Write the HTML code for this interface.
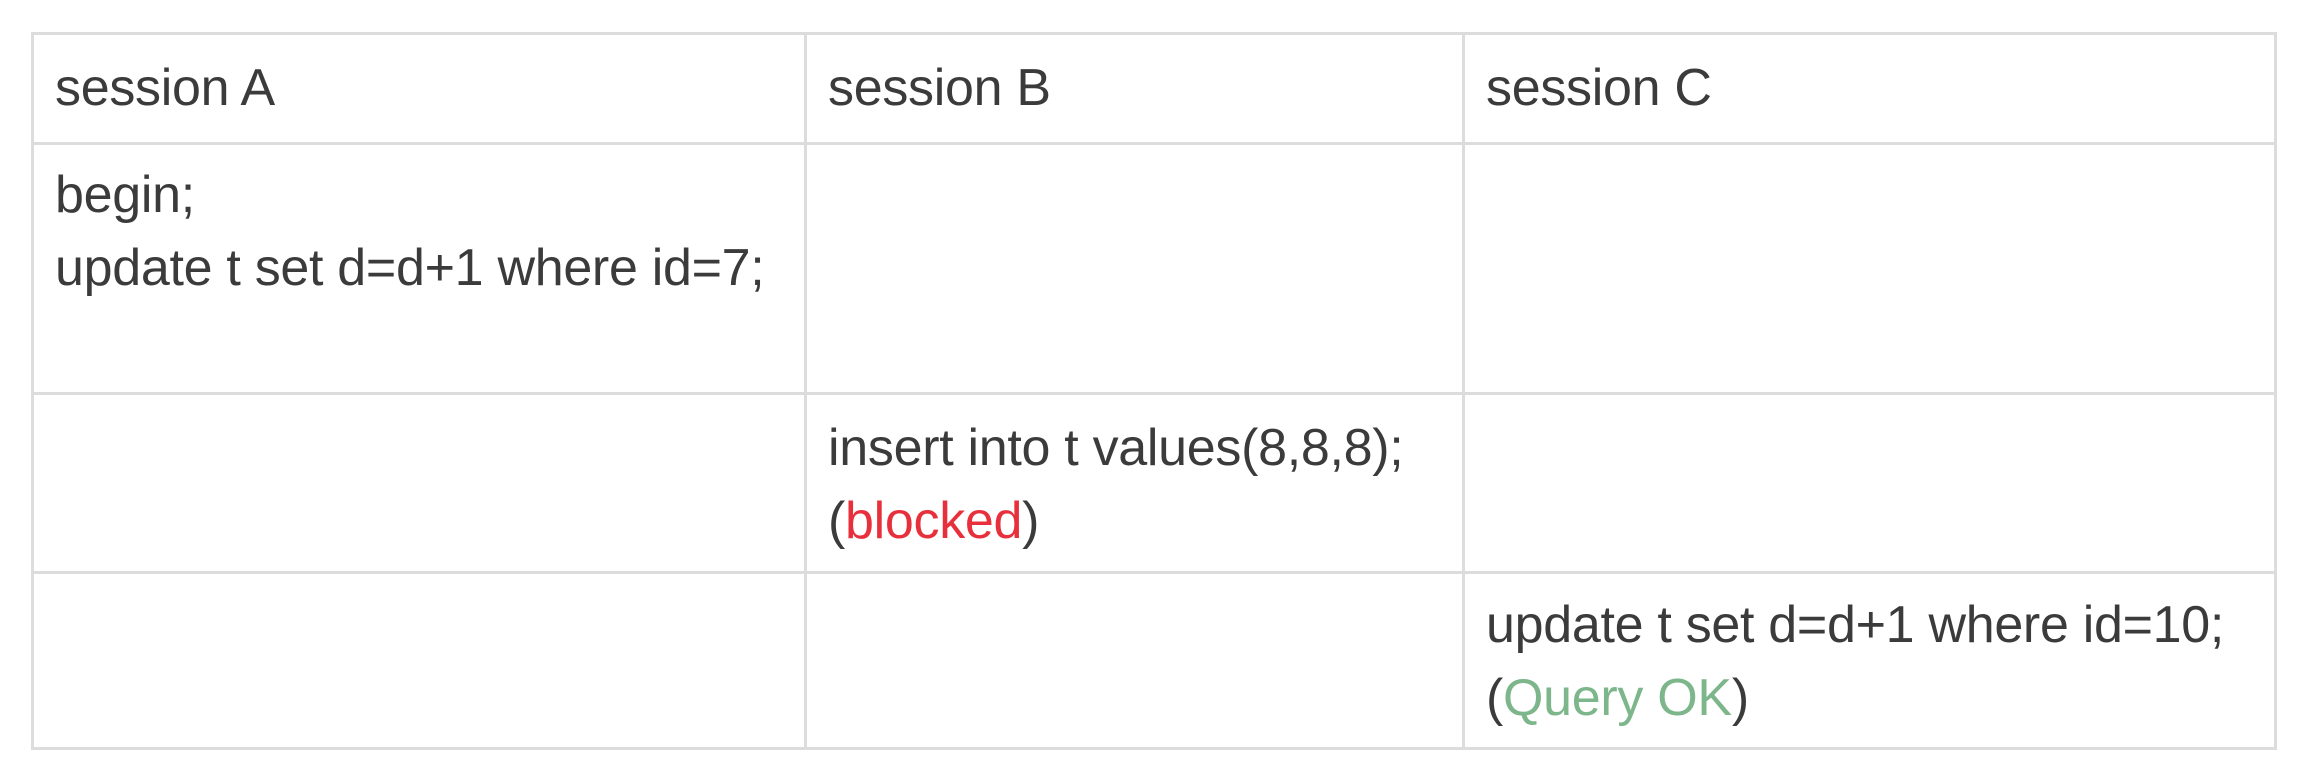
<!DOCTYPE html>
<html><head><meta charset="utf-8"><style>
html,body{margin:0;padding:0;background:#fff;width:2314px;height:784px;overflow:hidden}
body{position:relative;font-family:"Liberation Sans",sans-serif;color:#3b3b3b}
.h{position:absolute;background:#dcdcdc;height:3px}
.v{position:absolute;background:#dcdcdc;width:3px}
.t{position:absolute;font-size:52px;letter-spacing:-0.3px;line-height:73px;white-space:nowrap}
.r{color:#e8303c}.g{color:#7db68b}
</style></head><body>
<div class="h" style="left:32px;top:32px;width:2245px"></div>
<div class="h" style="left:32px;top:142px;width:2245px"></div>
<div class="h" style="left:32px;top:392px;width:2245px"></div>
<div class="h" style="left:32px;top:571px;width:2245px"></div>
<div class="h" style="left:32px;top:747px;width:2245px"></div>
<div class="v" style="left:31px;top:32px;height:718px"></div>
<div class="v" style="left:804px;top:32px;height:718px"></div>
<div class="v" style="left:1462px;top:32px;height:718px"></div>
<div class="v" style="left:2274px;top:32px;height:718px"></div>

<div class="t" style="left:55px;top:52px">session A</div>
<div class="t" style="left:828px;top:52px">session B</div>
<div class="t" style="left:1486px;top:52px">session C</div>

<div class="t" style="left:55px;top:159px">begin;<br>update t set d=d+1 where id=7;</div>
<div class="t" style="left:828px;top:412px">insert into t values(8,8,8);<br>(<span class="r">blocked</span>)</div>
<div class="t" style="left:1486px;top:589px">update t set d=d+1 where id=10;<br>(<span class="g">Query OK</span>)</div>
</body></html>
